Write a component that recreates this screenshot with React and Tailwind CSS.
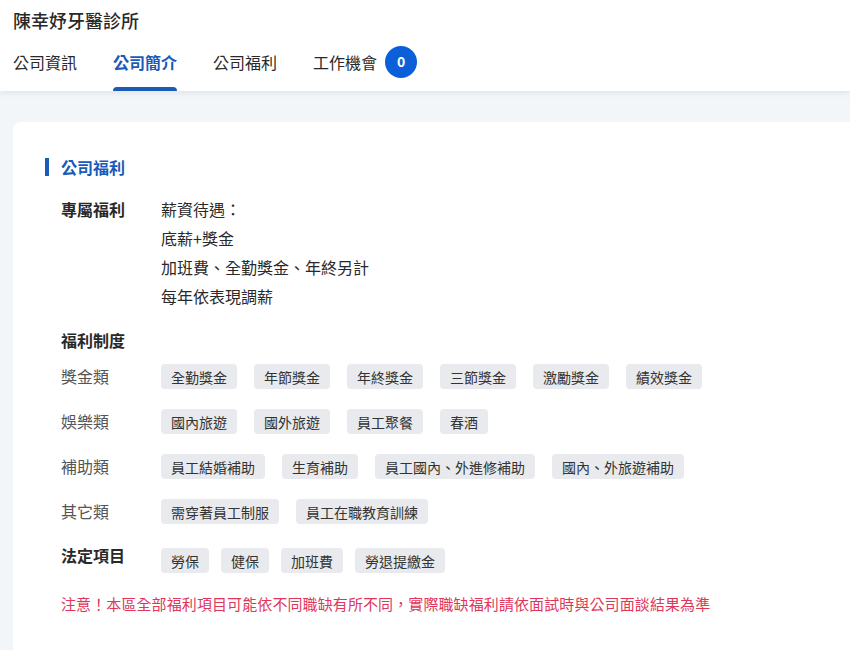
const TABS = [
  { label: '公司資訊' },
  { label: '公司簡介', active: true },
  { label: '公司福利' },
  { label: '工作機會', badge: 0 },
]

const SALARY = ['薪資待遇：', '底薪+獎金', '加班費、全勤獎金、年終另計', '每年依表現調薪']

const CATEGORIES = [
  { name: '獎金類', tags: ['全勤獎金', '年節獎金', '年終獎金', '三節獎金', '激勵獎金', '績效獎金'] },
  { name: '娛樂類', tags: ['國內旅遊', '國外旅遊', '員工聚餐', '春酒'] },
  { name: '補助類', tags: ['員工結婚補助', '生育補助', '員工國內、外進修補助', '國內、外旅遊補助'] },
  { name: '其它類', tags: ['需穿著員工制服', '員工在職教育訓練'] },
]

const LEGAL = ['勞保', '健保', '加班費', '勞退提繳金']

const Tag = ({ children }) => (
  <span className="flex h-[25px] items-center rounded bg-[#e8eaed] px-[10px] text-[14px] leading-none text-[#333]">
    {children}
  </span>
)

const App = () => {
  return (
    <div className="flex h-screen flex-col overflow-hidden bg-[#f3f6f8] font-['Noto_Sans_CJK_TC','Noto_Sans',sans-serif] text-[#292929]">
      <header className="relative z-10 bg-white px-[13px] pt-[8px] shadow-[0_2px_6px_rgba(0,0,0,0.08)]">
        <h1 className="text-[18px] leading-[24px] font-medium">陳幸妤牙醫診所</h1>
        <nav className="flex gap-9">
          {TABS.map((tab) => (
            <div key={tab.label} className="relative flex h-[59px] items-center gap-2">
              <span
                className={`text-[16px] leading-6 ${tab.active ? 'font-bold text-[#1a5bb7]' : ''}`}
              >
                {tab.label}
              </span>
              {tab.badge !== undefined && (
                <span className="flex h-8 w-8 items-center justify-center rounded-full bg-[#0b5fd8] text-[14px] font-bold text-white">
                  {tab.badge}
                </span>
              )}
              {tab.active && (
                <span className="absolute right-0 bottom-0 left-0 h-1 rounded-t bg-[#1a5bb7]" />
              )}
            </div>
          ))}
        </nav>
      </header>

      <main className="flex flex-1 flex-col pt-[31px] pl-[13px]">
        <section className="flex-1 rounded-tl-lg bg-white pt-[33px] pl-8">
          <h2 className="flex items-center gap-3 text-[16px] leading-6 font-bold text-[#1a5bb7]">
            <span className="h-[18px] w-1 bg-[#1a5bb7]" />
            公司福利
          </h2>

          <div className="mt-[16px] pl-4">
            <div className="flex text-[16px] leading-[29px]">
              <span className="w-[100px] font-bold">專屬福利</span>
              <div>
                {SALARY.map((line) => (
                  <p key={line}>{line}</p>
                ))}
              </div>
            </div>

            <p className="mt-[17px] text-[16px] leading-6 font-bold">福利制度</p>

            <div className="mt-[12px] flex flex-col gap-5">
              {CATEGORIES.map((cat) => (
                <div key={cat.name} className="flex items-center">
                  <span className="w-[100px] text-[16px] leading-[25px] text-[#555]">{cat.name}</span>
                  <div className="flex gap-[17px]">
                    {cat.tags.map((t) => (
                      <Tag key={t}>{t}</Tag>
                    ))}
                  </div>
                </div>
              ))}
            </div>

            <div className="mt-[24px] flex">
              <span className="-mt-[5px] w-[100px] text-[16px] leading-6 font-bold">法定項目</span>
              <div className="flex gap-3">
                {LEGAL.map((t) => (
                  <Tag key={t}>{t}</Tag>
                ))}
              </div>
            </div>

            <p className="mt-[20px] text-[15px] leading-[22px] tracking-[0.1px] text-[#e0365a]">
              注意！本區全部福利項目可能依不同職缺有所不同，實際職缺福利請依面試時與公司面談結果為準
            </p>
          </div>
        </section>
      </main>
    </div>
  )
}

export default App
